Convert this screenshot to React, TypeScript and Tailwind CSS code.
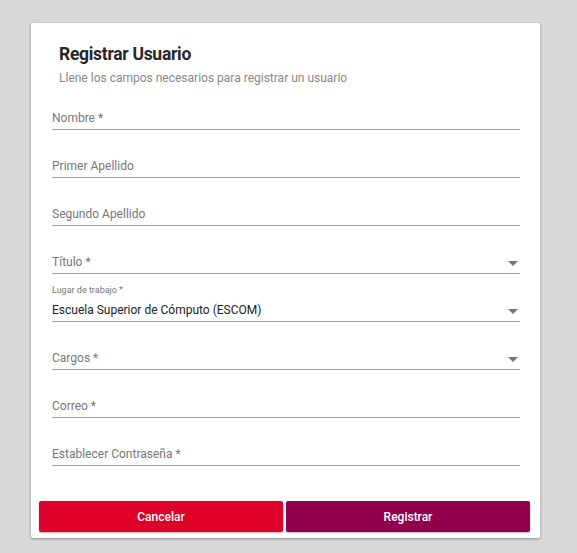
import React from "react";

const font = { fontFamily: "Roboto, 'Liberation Sans', sans-serif" };

function Arrow() {
  return (
    <svg width="10" height="5" viewBox="0 0 10 5" className="mr-[2px] mb-[7px] shrink-0">
      <path d="M0 0 L10 0 L5 5 Z" fill="#757575" />
    </svg>
  );
}

function Field({ label, select }: { label: string; select?: boolean }) {
  return (
    <div className="h-[48px] flex flex-col justify-end">
      <div className="flex items-end justify-between border-b border-[#a3a3a3]">
        <span className="text-[12px] leading-[20px] pb-[1px] text-[#777]">{label}</span>
        {select && <Arrow />}
      </div>
    </div>
  );
}

function FilledSelect({ label, value }: { label: string; value: string }) {
  return (
    <div className="h-[48px] flex flex-col justify-end">
      <span className="text-[9px] leading-[12px] text-[#777] mb-[4px]">{label}</span>
      <div className="flex items-end justify-between border-b border-[#a3a3a3]">
        <span className="text-[12px] leading-[20px] pb-[1px] text-[#222]">{value}</span>
        <Arrow />
      </div>
    </div>
  );
}

export default function App() {
  return (
    <div className="min-h-[553px] bg-[#d8d8d8] pt-[23px] pl-[31px]" style={font}>
      <div className="w-[509px] bg-white rounded-[2px] shadow-[0_1px_3px_rgba(0,0,0,0.35)] pt-[19px] pb-[6px]">
        <div className="pl-[28px]">
          <h1 className="text-[17.5px] leading-[24px] font-bold text-[#262626] tracking-[-0.3px]">Registrar Usuario</h1>
          <p className="text-[12px] leading-[16px] text-[#888] mt-[4px]">Llene los campos necesarios para registrar un usuario</p>
        </div>
        <div className="pl-[21px] pr-[20px] mt-[-4px]">
          <Field label="Nombre *" />
          <Field label="Primer Apellido" />
          <Field label="Segundo Apellido" />
          <Field label="Título *" select />
          <FilledSelect label="Lugar de trabajo *" value="Escuela Superior de Cómputo (ESCOM)" />
          <Field label="Cargos *" select />
          <Field label="Correo *" />
          <Field label="Establecer Contraseña *" />
        </div>
        <div className="flex gap-[3px] pl-[8px] pr-[10px] mt-[35px]">
          <button className="flex-1 h-[31px] rounded-[2px] bg-[#de0029] text-white text-[12px] font-medium shadow-[0_1px_2px_rgba(0,0,0,0.3)]">Cancelar</button>
          <button className="flex-1 h-[31px] rounded-[2px] bg-[#91004d] text-white text-[12px] font-medium shadow-[0_1px_2px_rgba(0,0,0,0.3)]">Registrar</button>
        </div>
      </div>
    </div>
  );
}
